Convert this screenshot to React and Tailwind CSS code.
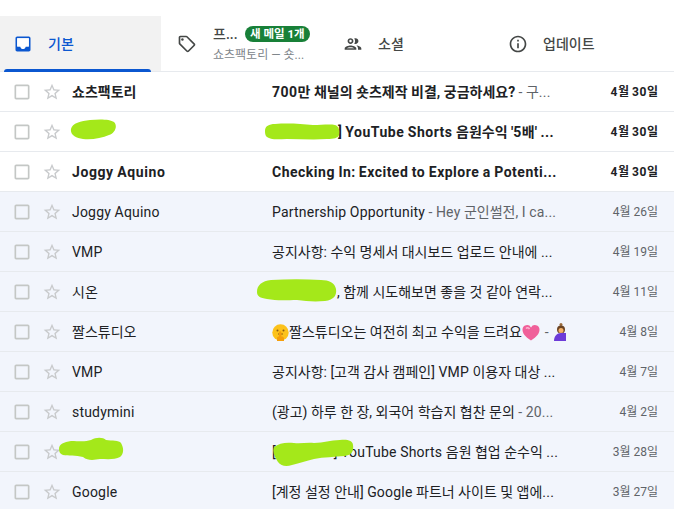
const FONT = "font-['Roboto','Noto_Sans_CJK_KR',sans-serif]";

const ROWS = [
  { sender: "쇼츠팩토리", subject: "700만 채널의 숏츠제작 비결, 궁금하세요?", preview: " - 구...", date: "4월 30일", unread: true },
  { sender: "", gap: 66, subject: "] YouTube Shorts 음원수익 '5배' ...", date: "4월 30일", unread: true, marks: ["sender2", "subject2"] },
  { sender: "Joggy Aquino", subject: "Checking In: Excited to Explore a Potenti...", date: "4월 30일", unread: true },
  { sender: "Joggy Aquino", subject: "Partnership Opportunity", preview: " - Hey 군인썰전, I ca...", date: "4월 26일" },
  { sender: "VMP", subject: "공지사항: 수익 명세서 대시보드 업로드 안내에 ...", date: "4월 19일" },
  { sender: "시온", gap: 65, subject: ", 함께 시도해보면 좋을 것 같아 연락...", date: "4월 11일", marks: ["subject6"] },
  { sender: "짤스튜디오", subject: "짤스튜디오는 여전히 최고 수익을 드려요", date: "4월 8일", emoji: true },
  { sender: "VMP", subject: "공지사항: [고객 감사 캠페인] VMP 이용자 대상 ...", date: "4월 7일" },
  { sender: "studymini", subject: "(광고) 하루 한 장, 외국어 학습지 협찬 문의", preview: " - 20...", date: "4월 2일" },
  { sender: "", lead: "[", gap: 58, subject: "] YouTube Shorts 음원 협업 순수익 ...", date: "3월 28일", marks: ["sender10", "subject10"] },
  { sender: "Google", subject: "[계정 설정 안내] Google 파트너 사이트 및 앱에...", date: "3월 27일" },
];

// Latin letters run wider in the screenshot than plain Roboto, Korean does not
const Spaced = ({ text, tracking }) =>
  text.split(/([A-Za-z0-9.]+)/).map((part, i) =>
    i % 2 ? (
      <span key={i} className={tracking}>
        {part}
      </span>
    ) : (
      part
    ),
  );

const MaterialIcon = ({ d, className, children }) => (
  <svg className={className} width="20" height="20" viewBox="0 0 24 24" fill="currentColor">
    <path d={d} />
    {children}
  </svg>
);

const ICONS = {
  inbox: "M19 3H4.99c-1.11 0-1.98.89-1.98 2L3 19c0 1.1.88 2 1.99 2H19c1.1 0 2-.9 2-2V5c0-1.11-.9-2-2-2zm0 12h-4c0 1.66-1.35 3-3 3s-3-1.34-3-3H4.99V5H19v10z",
  tag: "M21.41 11.41l-8.83-8.83C12.21 2.21 11.7 2 11.17 2H4c-1.1 0-2 .9-2 2v7.17c0 .53.21 1.04.59 1.41l8.83 8.83c.78.78 2.05.78 2.83 0l7.17-7.17c.78-.78.78-2.04-.01-2.83zM12.83 20L4 11.17V4h7.17L20 12.83 12.83 20z",
  people: "M9 13.75c-2.34 0-7 1.17-7 3.5V19h14v-1.75c0-2.33-4.66-3.5-7-3.5zM4.34 17c.84-.58 2.87-1.25 4.66-1.25s3.82.67 4.66 1.25H4.34zM9 12c1.93 0 3.5-1.57 3.5-3.5S10.93 5 9 5 5.5 6.57 5.5 8.5 7.07 12 9 12zm0-5c.83 0 1.5.67 1.5 1.5S9.83 10 9 10s-1.5-.67-1.5-1.5S8.17 7 9 7zm7.04 6.81c1.16.84 1.96 1.96 1.96 3.44V19h4v-1.75c0-2.02-3.5-3.17-5.96-3.44zM15 12c1.93 0 3.5-1.57 3.5-3.5S16.93 5 15 5c-.54 0-1.04.13-1.5.35.63.89 1 1.98 1 3.15s-.37 2.26-1 3.15c.46.22.96.35 1.5.35z",
  info: "M11 7h2v2h-2zm0 4h2v6h-2zm1-9C6.48 2 2 6.48 2 12s4.48 10 10 10 10-4.48 10-10S17.52 2 12 2zm0 18c-4.41 0-8-3.59-8-8s3.59-8 8-8 8 3.59 8 8-3.59 8-8 8z",
  checkbox: "M19 5v14H5V5h14m0-2H5c-1.1 0-2 .9-2 2v14c0 1.1.9 2 2 2h14c1.1 0 2-.9 2-2V5c0-1.1-.9-2-2-2z",
  star: "M22 9.24l-7.19-.62L12 2 9.19 8.63 2 9.24l5.46 4.73L5.82 21 12 17.27 18.18 21l-1.63-7.03L22 9.24zM12 15.4l-3.76 2.27 1-4.28-3.32-2.88 4.38-.38L12 6.1l1.71 4.04 4.38.38-3.32 2.88 1 4.28L12 15.4z",
};

// green scribbles that hide names in the screenshot
const Scribble = ({ kind }) => {
  if (kind === "sender2")
    return (
      <svg className="absolute left-[70px] top-[7px]" width="47" height="22" viewBox="0 0 47 22">
        <path d="M1 10C2 4 11 2 20 1c9-1 20-1 24 2 4 4 1 11-5 13-7 3-17 5-26 4C6 19 0 16 1 10Z" fill="#a4e81a" />
      </svg>
    );
  if (kind === "subject2")
    return (
      <svg className="absolute left-[265px] top-[11px]" width="75" height="17" viewBox="0 0 75 17">
        <path d="M0 8C0 3 4 1 10 1c14-1 26 0 38 1 8 0 17-1 22 0 4 1 5 6 4 10-1 3-5 4-12 4-13 1-27 0-40 0-7 0-15 1-18-1C1 14 0 12 0 8Z" fill="#a4e81a" />
      </svg>
    );
  if (kind === "subject6")
    return (
      <svg className="absolute left-[257px] top-[7px]" width="80" height="23" viewBox="0 0 80 23">
        <path d="M0 13C0 6 5 2 14 1c17-1 34-1 50 0 8 0 14 3 15 9 1 6-2 11-11 12-12 1-19 0-28-1-9 0-20 1-30-1C3 19 0 17 0 13Z" fill="#a4e81a" />
      </svg>
    );
  if (kind === "sender10")
    return (
      <svg className="absolute left-[59px] top-[5px]" width="65" height="24" viewBox="0 0 65 24">
        <path d="M0 12C0 7 5 5 12 4c8 0 14 1 20-1 5-3 12-3 15 0 6 1 13 0 15 3 3 5 3 11-1 14-5 3-14 2-20 2-6 1-12 2-17-2C17 18 9 19 4 18 1 17 0 15 0 12Z" fill="#a4e81a" />
      </svg>
    );
  return (
    <svg className="absolute left-[273px] top-[7px]" width="81" height="28" viewBox="0 0 81 28">
      <path d="M1 8c5-4 12-5 20-4 7 1 13-1 20 0 10 0 16-3 26-3 6-1 13 0 13 5 1 7-2 10-8 11-11 1-21 1-31 3-8 2-14 4-22 6-6 2-11 1-14-3-3-5-6-10-4-15Z" fill="#a4e81a" />
    </svg>
  );
};

const ShushEmoji = () => (
  <svg className="inline-block align-[-4px]" width="17" height="17" viewBox="0 0 17 17">
    <circle cx="8.5" cy="8.5" r="8.2" fill="#fcc21b" />
    <circle cx="5.5" cy="6.5" r="1" fill="#8a5a12" />
    <circle cx="11.5" cy="6.5" r="1" fill="#8a5a12" />
    <path d="M6 10h5" stroke="#8a5a12" strokeWidth="1" />
    <path d="M5 17v-3c0-1 1-1.5 2-1.5V8.5a1.2 1.2 0 0 1 2.4 0v4c1.5 0 2.6.5 2.6 2V17Z" fill="#f59e0b" />
  </svg>
);

const HeartEmoji = () => (
  <svg className="inline-block align-[-4px]" width="18" height="17" viewBox="0 0 18 17">
    <path d="M9 16.5C3 12.5.5 9.5.5 5.5A4.5 4.5 0 0 1 9 3.5a4.5 4.5 0 0 1 8.5 2C17.5 9.5 15 12.5 9 16.5Z" fill="#f0609a" />
    <path d="M4 4.5c1-1 2.5-1 3.5.5" stroke="#fbb6d0" strokeWidth="1.5" fill="none" />
  </svg>
);

// cut off on its right side in the screenshot, like the row's text
const PersonEmoji = () => (
  <svg className="inline-block align-[-4px]" width="12" height="18" viewBox="0 0 12 18">
    <circle cx="7" cy="1.5" r="1.5" fill="#9a6a3a" />
    <circle cx="7" cy="6.5" r="4" fill="#6b4423" />
    <circle cx="7" cy="7.5" r="2.5" fill="#f7b26a" />
    <path d="M0 18c0-5 3-8 7-8h5v8Z" fill="#6d3bd8" />
  </svg>
);

const MailRow = ({ row }) => {
  const weight = row.unread ? "font-bold" : "font-normal";
  return (
    <div
      className={`relative flex h-10 items-center border-b border-[#e7eaee] ${
        row.unread ? "bg-white" : "bg-[#f2f5fc]"
      }`}
    >
      <MaterialIcon d={ICONS.checkbox} className="ml-3 shrink-0 text-[#c4c7c5]" />
      <MaterialIcon d={ICONS.star} className="ml-[10px] shrink-0 text-[#c8cacc]" />
      <div className={`ml-[10px] w-[200px] shrink-0 whitespace-nowrap text-sm text-[#202124] ${weight}`}>
        <Spaced text={row.sender} tracking={row.unread ? "tracking-[0.6px]" : "tracking-[0.2px]"} />
      </div>
      <div className="w-[299px] shrink-0 whitespace-nowrap text-sm text-[#202124]">
        {row.lead}
        {row.gap && <span className="inline-block" style={{ width: row.gap }} />}
        {row.emoji && <ShushEmoji />}
        <span className={weight}>
          <Spaced text={row.subject} tracking={row.unread ? "tracking-[0.5px]" : "tracking-[0.2px]"} />
        </span>
        {row.emoji && <HeartEmoji />}
        {row.preview && (
          <span className="text-[#5f6368]">
            <Spaced text={row.preview} tracking="tracking-[0.2px]" />
          </span>
        )}
        {row.emoji && <span className="mx-[5px] text-[#5f6368]">-</span>}
        {row.emoji && <PersonEmoji />}
      </div>
      <div
        className={`w-[87px] shrink-0 text-right text-xs ${
          row.unread ? "font-bold text-[#202124]" : "text-[#5f6368]"
        }`}
      >
        <Spaced text={row.date} tracking={row.unread ? "tracking-[0.6px]" : "tracking-normal"} />
      </div>
      {row.marks?.map((m) => <Scribble key={m} kind={m} />)}
    </div>
  );
};

export default function App() {
  return (
    <div className={`${FONT} h-[509px] w-[677px] overflow-hidden bg-white pr-[3px] pt-4`}>
      <div className="flex h-14 border-b border-[#e7eaee]">
        <div className="relative flex w-[161px] shrink-0 items-center bg-[#f2f2f2] pl-[12.5px]">
          <MaterialIcon d={ICONS.inbox} className="text-[#0b57d0]">
            <path d="M5 5h14v10h-4c0 1.66-1.35 3-3 3s-3-1.34-3-3H5z" fill="#fff" />
          </MaterialIcon>
          <span className="ml-[15.5px] text-sm font-medium text-[#0b57d0]">기본</span>
          <div className="absolute bottom-[-1px] left-1 right-[10px] h-[3px] rounded-t-sm bg-[#0b57d0]" />
        </div>
        <div className="flex w-[168px] shrink-0 items-center pl-[16px]">
          <MaterialIcon d={ICONS.tag} className="text-[#444746]">
            <circle cx="6.5" cy="6.5" r="1.5" />
          </MaterialIcon>
          <div className="ml-[16px]">
            <div className="flex items-center">
              <span className="w-8 text-sm font-medium text-[#444746]">프...</span>
              <span className="rounded-full bg-[#188038] px-[5px] text-[11.5px] leading-4 font-bold text-white">새 메일 1개</span>
            </div>
            <div className="mt-[3px] text-xs text-[#80868b]">쇼츠팩토리 — 숏...</div>
          </div>
        </div>
        <div className="flex w-[165px] shrink-0 items-center pl-[13.5px]">
          <MaterialIcon d={ICONS.people} className="text-[#444746]" />
          <span className="ml-[15.5px] text-sm font-medium text-[#444746]">소셜</span>
        </div>
        <div className="flex flex-1 items-center pl-[13.5px]">
          <MaterialIcon d={ICONS.info} className="text-[#444746]" />
          <span className="ml-[15.5px] text-sm font-medium text-[#444746]">업데이트</span>
        </div>
      </div>
      {ROWS.map((row, i) => (
        <MailRow key={i} row={row} />
      ))}
    </div>
  );
}
